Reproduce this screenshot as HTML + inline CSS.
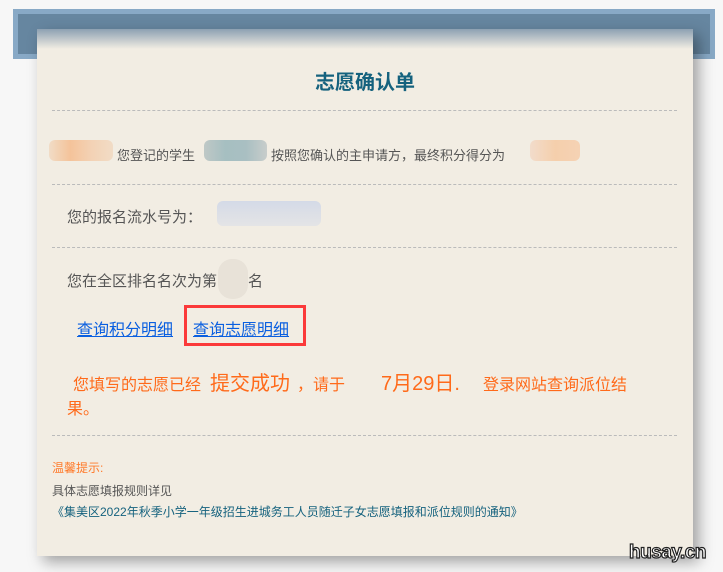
<!DOCTYPE html>
<html><head><meta charset="utf-8"><style>
*{margin:0;padding:0;box-sizing:border-box}
body{width:723px;height:572px;background:#f7f7f7;position:relative;overflow:hidden;font-family:"Liberation Sans","Noto Sans CJK SC",sans-serif}
.band{position:absolute;left:13px;top:9px;width:702px;height:50px;background:#6686a0;border:5px solid #88a9c6}
.card{position:absolute;left:37px;top:29px;width:656px;height:527px;background:#f2ede3;box-shadow:6px 6px 14px rgba(0,0,0,.35)}
.card:before{content:"";position:absolute;left:0;top:0;right:0;height:20px;background:linear-gradient(#8ca0b2,#f2ede3)}
.t{position:absolute;color:#555;font-size:13px;white-space:nowrap}
.o{position:absolute;color:#ff6a1a;white-space:nowrap;font-size:16px}
.hr{position:absolute;left:15px;width:625px;border-top:1px dashed #bbb}
.blur{position:absolute;border-radius:6px}
a{color:#0a5fe0;text-decoration:underline}
</style></head><body>
<div class="band"></div>
<div class="card">
<div class="t" style="left:0;width:656px;text-align:center;top:37px;font-size:20px;font-weight:bold;color:#15627e">志愿确认单</div>
<div class="hr" style="top:81px"></div>
<div class="blur" style="left:12px;top:111px;width:64px;height:21px;background:linear-gradient(90deg,#f1dcc6,#f4c39a,#f3d2b5,#f1dcc6)"></div>
<div class="t" style="left:80px;top:116px">您登记的学生</div>
<div class="blur" style="left:167px;top:111px;width:63px;height:21px;background:linear-gradient(90deg,#bfc8c6,#a6bfc1,#a9bfc2,#c8cdcb)"></div>
<div class="t" style="left:234px;top:116px">按照您确认的主申请方，最终积分得分为</div>
<div class="blur" style="left:493px;top:111px;width:50px;height:21px;background:linear-gradient(90deg,#f2dccb,#f5cfac,#f5d2b4)"></div>
<div class="hr" style="top:155px"></div>
<div class="t" style="left:30px;top:177px;font-size:15px">您的报名流水号为：</div>
<div class="blur" style="left:180px;top:172px;width:104px;height:25px;background:linear-gradient(#d4dae7,#e4e4e6)"></div>
<div class="hr" style="top:218px"></div>
<div class="t" style="left:30px;top:241px;font-size:15px">您在全区排名名次为第</div>
<div class="blur" style="left:181px;top:230px;width:30px;height:40px;border-radius:14px;background:#e8e2d8"></div>
<div class="t" style="left:211px;top:241px;font-size:15px">名</div>
<div class="t" style="left:40px;top:287px;font-size:16px"><a>查询积分明细</a></div>
<div class="t" style="left:156px;top:287px;font-size:16px"><a>查询志愿明细</a></div>
<div style="position:absolute;left:147px;top:276px;width:122px;height:41px;border:3px solid #fb3a3a"></div>
<div class="o" style="left:36px;top:342px">您填写的志愿已经</div>
<div class="o" style="left:173px;top:338px;font-size:20px">提交成功</div>
<div class="o" style="left:260px;top:342px">，请于</div>
<div class="o" style="left:344px;top:338px;font-size:20px">7月29日.</div>
<div class="o" style="left:446px;top:342px">登录网站查询派位结</div>
<div class="o" style="left:30px;top:366px">果。</div>
<div class="hr" style="top:406px"></div>
<div class="t" style="left:15px;top:430px;font-size:12px;color:#ff7a2a">温馨提示:</div>
<div class="t" style="left:15px;top:453px;font-size:12px;color:#555">具体志愿填报规则详见</div>
<div class="t" style="left:15px;top:474px;font-size:12px;color:#15627e">《集美区2022年秋季小学一年级招生进城务工人员随迁子女志愿填报和派位规则的通知》</div>
</div>
<div style="position:absolute;left:629px;top:542px;font:bold 19px 'Liberation Sans',sans-serif;color:#fff;-webkit-text-stroke:1.2px #222;letter-spacing:-0.5px">husay.cn</div>
</body></html>
